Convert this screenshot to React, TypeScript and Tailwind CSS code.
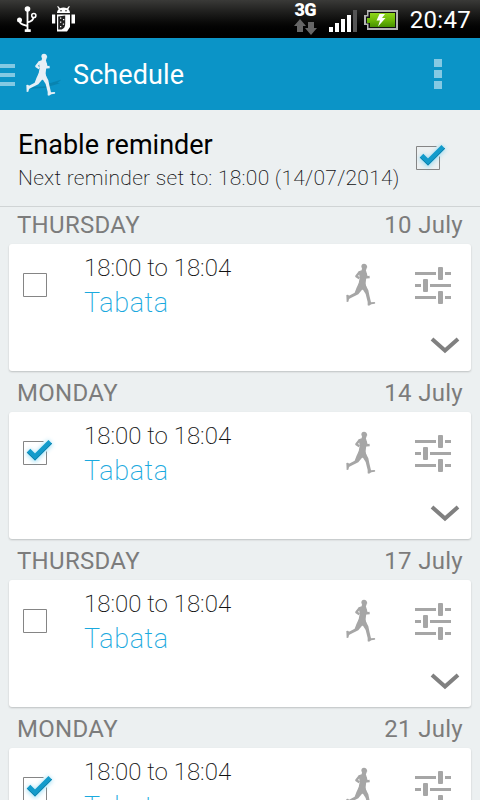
import { useState } from 'react';

type Workout = {
  id: number;
  day: string;
  date: string;
  time: string;
  name: string;
  enabled: boolean;
};

const initialWorkouts: Workout[] = [
  { id: 1, day: 'THURSDAY', date: '10 July', time: '18:00 to 18:04', name: 'Tabata', enabled: false },
  { id: 2, day: 'MONDAY', date: '14 July', time: '18:00 to 18:04', name: 'Tabata', enabled: true },
  { id: 3, day: 'THURSDAY', date: '17 July', time: '18:00 to 18:04', name: 'Tabata', enabled: false },
  { id: 4, day: 'MONDAY', date: '21 July', time: '18:00 to 18:04', name: 'Tabata', enabled: true },
];

function UsbIcon() {
  return (
    <svg className="block" width="20" height="28" viewBox="0 0 20 28" fill="none" stroke="#fff" strokeWidth="1.5">
      <circle cx="10.5" cy="4" r="2.8" fill="#fff" stroke="none" />
      <path d="M10.500 5v20M2.500 15c0 4 3 4.500 8 6M16.500 12c0 3-2 4.500-6 5.500" strokeWidth="1.800" />
      <circle cx="2.500" cy="15" r="2.500" fill="#fff" stroke="none" />
      <circle cx="16.800" cy="10.500" r="2.100" />
      <path d="M8.500 25h4.500v1.200H8.500z" fill="#fff" />
    </svg>
  );
}

function DebugIcon() {
  return (
    <svg className="block" width="23" height="28" viewBox="0 0 23 28" fill="#fff">
      <path d="M6 1l2 2.200a9 9 0 0 1 7 0L17 1l.8.6-1.500 2.600c1.200 1 1.700 2.300 1.700 3.800H5c0-1.500.6-2.900 1.700-3.800L5.200 1.600z" />
      <path d="M0 9.500h3.200v9H0zM19.500 9.500H23v9h-3.500zM5 9.500h13V22l-3 4.500H5z" />
      <path d="M6.200 11.500l7-1V19q0 4-3.500 5.500H6.200z" fill="#222" />
      <path d="M8 12.500h1.300v1.300H8zM11 14h1.300v1.300H11zM8 16.500h1.300v1.300H8zM10.800 18.500h1.300v1.300h-1.300zM8 21h1.300v1.300H8z" />
      <circle cx="9" cy="5.700" r=".8" fill="#222" />
      <circle cx="14" cy="5.700" r=".8" fill="#222" />
    </svg>
  );
}

function DataIcon() {
  return (
    <svg className="block" width="23" height="17" viewBox="0 0 23 17" fill="#666">
      <path d="M6 0l6 7H9v6H3V7H0zM14 3h6v6h3l-6 7-6-7h3z" />
    </svg>
  );
}

function SignalIcon() {
  return (
    <svg className="block" width="28" height="22" viewBox="0 0 28 22" fill="#fff">
      <path d="M0 17h4v5H0zM6 13h4v9H6zM12 9h4v13h-4zM18 5h4v17h-4z" />
      <path d="M24 0h4v22h-4z" fill="#555" />
    </svg>
  );
}

function BatteryIcon() {
  return (
    <svg className="block" width="34" height="20" viewBox="0 0 34 20">
      <defs>
        <linearGradient id="charge" x1="0" y1="0" x2="0" y2="1">
          <stop offset="0" stopColor="#8fd61c" />
          <stop offset=".5" stopColor="#6fbb08" />
          <stop offset="1" stopColor="#469000" />
        </linearGradient>
      </defs>
      <path d="M3 0h31v20H3v-5H0V5h3z" fill="#b4b4b4" />
      <path d="M4.500 2H32v16H4.500v-4.500H2v-7h2.500z" fill="#111" />
      <path d="M6 3h25v14H6v-4H3V8h3z" fill="url(#charge)" />
      <path d="M15.500 4H21l-3 4h3.500L14 16.500l2-6h-3.500z" fill="#fff" />
    </svg>
  );
}

function RunnerIcon({ light = false }: { light?: boolean }) {
  const color = light ? '#e6eff6' : '#a6a6a6';
  return (
    <svg className="block shrink-0" width="36" height="44" viewBox="45 66 108 132">
      {light && (
        <g fill="#087ba5" opacity=".65">
          <path d="M62 172l48-3 2 4-50 3zM112 162l42-13-12 10 8 1-30 9-8 1z" />
        </g>
      )}
      <g fill={color}>
        <path d="M94 80Q94 71 102 71Q110 71 111 79L112 82L110 83Q110 91 103 91L97 88Z" />
        <path d="M96 85L107 88L109 95Q112 100 110 109L108 120L107 130L109 142L96 150L85 136L89 113L86 94L95 91Z" />
        {/* back leg and foot */}
        <path d="M86 130L98 147L85 163L58 176L54 169L74 158Q79 144 86 130Z" />
        <path d="M49 165L54 164L61 171L57 178L55 185L50 186Z" />
        {/* front leg and foot */}
        <path d="M96 145L108 137L115 151L118 166L123 187L134 186Q138 189 134 191L124 193L117 197L113 196L113 186L107 162Z" />
      </g>
      <path d="M89 96L79 109L88 115M107 101L110 112L119 111" fill="none" stroke={color} strokeWidth="7" strokeLinejoin="round" />
    </svg>
  );
}

function SettingsIcon() {
  return (
    <svg className="block" width="36" height="38" viewBox="0 0 36 38" fill="#a6a6a6">
      <path d="M0 5h21v3H0zM30 5h6v3h-6zM0 17h6v3H0zM15 17h21v3H15zM0 29h21v3H0zM30 29h6v3h-6z" />
      <rect x="23" y="0" width="5" height="13" rx="1" />
      <rect x="8" y="12" width="5" height="13" rx="1" />
      <rect x="23" y="24" width="5" height="13" rx="1" />
    </svg>
  );
}

function Checkbox({ checked, label, onChange }: { checked: boolean; label: string; onChange: () => void }) {
  return (
    <button type="button" role="checkbox" aria-checked={checked} aria-label={label} onClick={onChange} className="block">
      <svg className="block overflow-visible" width="32" height="28" viewBox="0 0 32 28" fill="none">
        {checked ? (
          <>
            <path d="M20.500 3.500h-20v23h23v-13" stroke="#858585" />
            <path d="M5 13l7 7L27.500 4" stroke="#4fc3ec" strokeWidth="7" opacity=".45" className="blur-[2px]" />
            <path d="M5.500 12.700l6.500 6.300L27.300 3.800" stroke="#139bcb" strokeWidth="5.200" />
            <path d="M4.300 14.500l7.700 7.300L28.800 5.200" stroke="#0f82ab" />
          </>
        ) : (
          <path d="M.5 3.500h23v23H.5z" stroke="#858585" />
        )}
      </svg>
    </button>
  );
}

function StatusBar() {
  return (
    <div className="flex h-[38px] items-start bg-linear-to-b from-[#3a3a38] to-black text-white">
      <div className="flex gap-[15px] pt-[5px] pl-[17px]">
        <UsbIcon />
        <DebugIcon />
      </div>
      <div className="ml-auto flex items-start pr-[9px]">
        <div className="mr-3 flex w-[23px] flex-col items-center gap-[2px] pt-[1px]">
          <span className="h-[16px] text-[18px] leading-[18px] font-black tracking-[-0.5px]">3G</span>
          <DataIcon />
        </div>
        <div className="mt-[10px] mr-[7px]">
          <SignalIcon />
        </div>
        <div className="mt-[10px] mr-[12px]">
          <BatteryIcon />
        </div>
        <span className="mt-[5px] text-[24px] leading-[30px] tracking-[0.3px] whitespace-nowrap">20:47</span>
      </div>
    </div>
  );
}

function ActionBar() {
  return (
    <header className="flex h-[72px] items-center bg-[#0b94c7]">
      <div className="flex w-[15px] flex-col gap-[5px] pt-[2px]">
        <span className="h-1 bg-[#83c9e3]" />
        <span className="h-1 bg-[#83c9e3]" />
        <span className="h-1 bg-[#83c9e3]" />
      </div>
      <div className="ml-[10px]">
        <RunnerIcon light />
      </div>
      <h1 className="ml-3 pt-[2px] text-[27px] leading-8 tracking-[0.1px] text-white">Schedule</h1>
      <button type="button" aria-label="More options" className="mr-[38px] ml-auto flex w-2 flex-col gap-[3px]">
        <span className="size-2 bg-[#85c9e3]" />
        <span className="size-2 bg-[#85c9e3]" />
        <span className="size-2 bg-[#85c9e3]" />
      </button>
    </header>
  );
}

function WorkoutSection({ workout, onToggle }: { workout: Workout; onToggle: () => void }) {
  return (
    <section className="h-[168px] shrink-0">
      <div className="flex h-[37px] items-center justify-between pr-[17px] pb-[2px] pl-[17px] text-[24px] text-[#7c7c7c]">
        <span className="tracking-[0.3px]">{workout.day}</span>
        <span className="tracking-[0.3px]">{workout.date}</span>
      </div>
      <div className="mx-[9px] flex h-[127px] rounded-[3px] bg-white shadow-[0_1px_2px_rgba(0,0,0,0.2)]">
        <div className="w-[75px] pt-[26px] pl-[14px]">
          <Checkbox checked={workout.enabled} label={workout.day} onChange={onToggle} />
        </div>
        <div className="pt-[8px]">
          <p className="text-[24px] leading-8 font-extralight text-[#111]">{workout.time}</p>
          <p className="mt-[1px] text-[27px] leading-9 font-extralight tracking-[0.6px] text-[#1ba9de]">{workout.name}</p>
        </div>
        <div className="ml-auto flex flex-col pr-[11px]">
          <div className="flex h-[93px] items-start">
            <div className="mt-[18px] mr-[34px]">
              <RunnerIcon />
            </div>
            <div className="mt-[23px] mr-[9px]">
              <SettingsIcon />
            </div>
          </div>
          <svg className="self-end" width="30" height="18" viewBox="0 0 30 18" fill="none" stroke="#808080" strokeWidth="4">
            <path d="M2 2l13 11.500L28 2" />
          </svg>
        </div>
      </div>
    </section>
  );
}

function App() {
  const [reminder, setReminder] = useState(true);
  const [workouts, setWorkouts] = useState(initialWorkouts);

  const toggleWorkout = (id: number) => {
    setWorkouts(workouts.map((w) => (w.id === id ? { ...w, enabled: !w.enabled } : w)));
  };

  return (
    <div className="flex h-[800px] w-[480px] flex-col overflow-hidden bg-[#ecf0f1] font-[Roboto,sans-serif]">
      <StatusBar />
      <ActionBar />
      <div className="flex h-[97px] shrink-0 border-b border-[#d0d4d5] pl-[18px]">
        <div className="pt-[19px] whitespace-nowrap">
          <p className="text-[27px] leading-8 text-black">Enable reminder</p>
          <p className="mt-[-1px] text-[21px] leading-9 font-extralight tracking-[0.26px] text-[#111]">Next reminder set to: 18:00 (14/07/2014)</p>
        </div>
        <div className="mt-[33px] mr-8 ml-auto">
          <Checkbox checked={reminder} label="Enable reminder" onChange={() => setReminder(!reminder)} />
        </div>
      </div>
      <main className="flex min-h-0 flex-1 flex-col overflow-hidden">
        {workouts.map((workout) => (
          <WorkoutSection key={workout.id} workout={workout} onToggle={() => toggleWorkout(workout.id)} />
        ))}
      </main>
    </div>
  );
}

export default App;
